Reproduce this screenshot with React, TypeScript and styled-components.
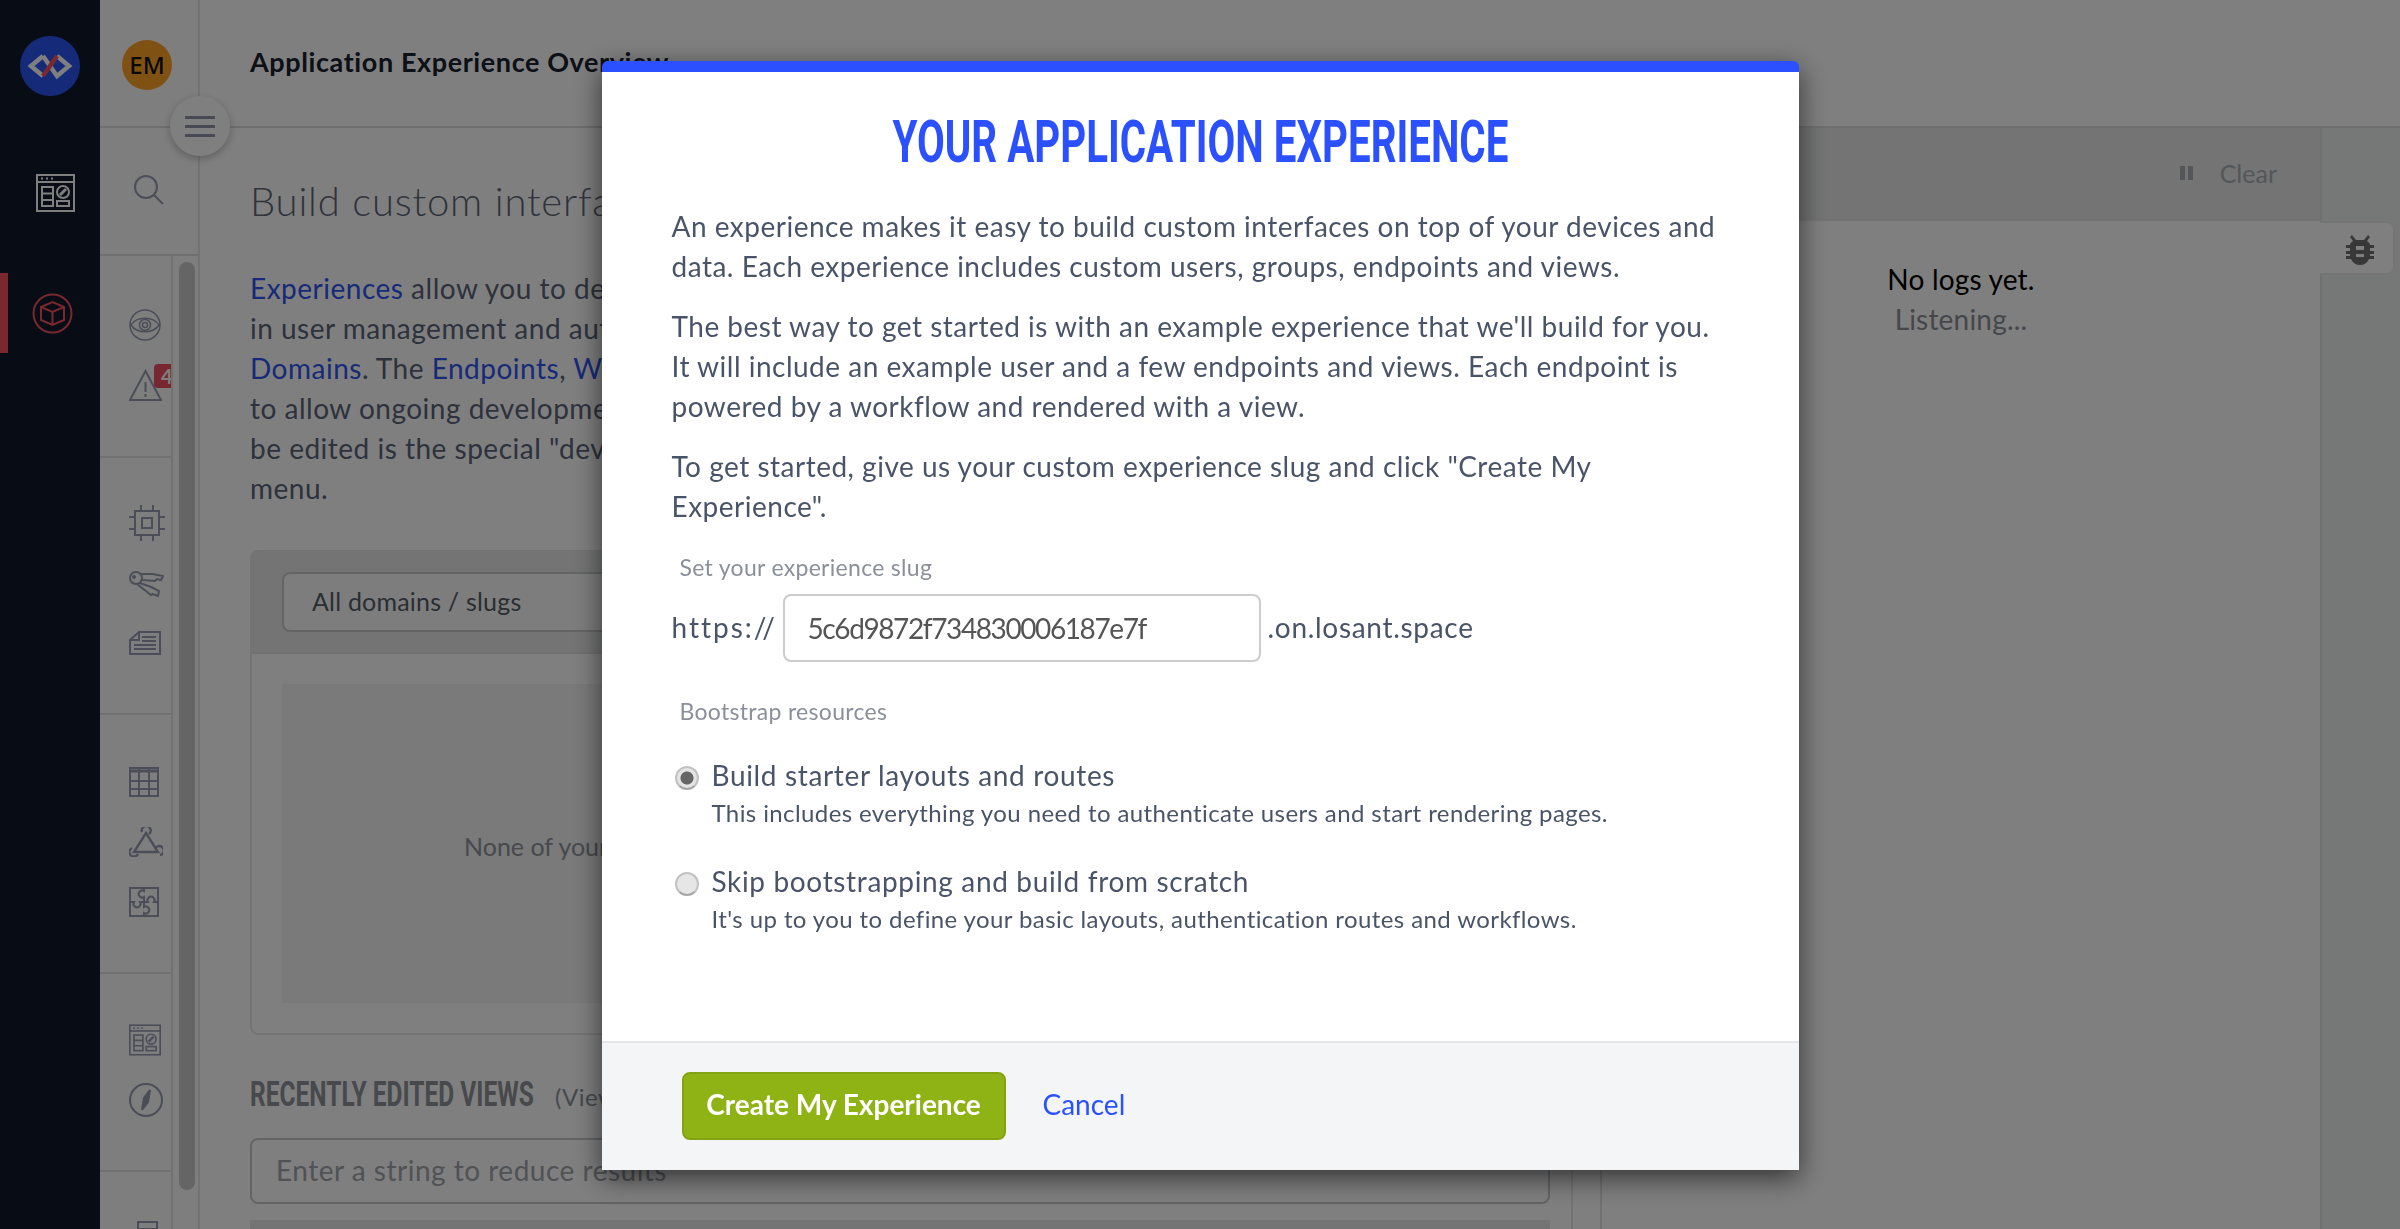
import React from "react";
import styled, { createGlobalStyle } from "styled-components";

const BODY_FONT = `"Lato", "Noto Sans", sans-serif`;
const HEADING_FONT = `"Roboto", "Liberation Sans", sans-serif`;

const GlobalStyle = createGlobalStyle`
  html, body {
    margin: 0;
    padding: 0;
    height: 100%;
    overflow: hidden;
    background: #fff;
  }
  * {
    box-sizing: border-box;
  }
`;

const Page = styled.div`
  width: 2400px;
  height: 1229px;
  display: flex;
  overflow: hidden;
  font-family: ${BODY_FONT};
  font-size: 28px;
  line-height: 40px;
  letter-spacing: 0.5px;
  color: #5a6478;
`;

const DarkRail = styled.nav`
  width: 100px;
  flex: none;
  background: #0e182a;
  display: flex;
  flex-direction: column;
  align-items: center;
`;

const LogoCircle = styled.div`
  width: 60px;
  height: 60px;
  margin-top: 36px;
  border-radius: 50%;
  background: #2c55f5;
  display: flex;
  align-items: center;
  justify-content: center;
`;

const RailButton = styled.div<{ $active?: boolean }>`
  width: 100%;
  height: 80px;
  display: flex;
  align-items: center;
  justify-content: center;
  padding-left: 2px;
  border-left: 8px solid ${(p) => (p.$active ? "#f5505f" : "transparent")};
  padding-right: ${(p) => (p.$active ? "6px" : "0")};
  margin-top: ${(p) => (p.$active ? "40px" : "57px")};
  color: ${(p) => (p.$active ? "#f5505f" : "#fff")};
`;

const SideNav = styled.div`
  width: 100px;
  flex: none;
  background: #fbfdfb;
  border-right: 2px solid #e4e6e4;
  display: flex;
  flex-direction: column;
  overflow: hidden;
`;

const AvatarBox = styled.div`
  height: 128px;
  flex: none;
  border-bottom: 2px solid #dcdedc;
  padding: 40px 0 0 22px;
`;

const Avatar = styled.div`
  width: 50px;
  height: 50px;
  border-radius: 50%;
  background: #ffa526;
  color: #111;
  font-size: 24px;
  font-weight: 500;
  line-height: 50px;
  letter-spacing: 0;
  text-align: center;
  font-family: "Noto Sans", sans-serif;
`;

const SearchBox = styled.div`
  height: 128px;
  flex: none;
  border-bottom: 2px solid #dcdedc;
  padding: 47px 0 0 33px;
  color: #969cb0;
`;

const SideScroll = styled.div`
  flex: 1;
  display: flex;
  min-height: 0;
`;

const SideGroups = styled.div`
  width: 71px;
  flex: none;
`;

const SideGroup = styled.div<{ $height: number; $top: number }>`
  height: ${(p) => p.$height}px;
  padding-top: ${(p) => p.$top}px;
  border-bottom: 2px solid #e0e2e0;
`;

const SideIcon = styled.div`
  height: 60px;
  padding-left: 29px;
  display: flex;
  align-items: center;
  position: relative;
  color: #969cb0;
`;

const Badge = styled.span`
  position: absolute;
  left: 54px;
  top: 9px;
  width: 17px;
  height: 24px;
  overflow: hidden;
  background: #ee4f5e;
  border-radius: 4px 0 0 4px;
  color: #fff;
  font-size: 20px;
  font-weight: 700;
  line-height: 24px;
  padding-left: 7px;
`;

const ScrollTrack = styled.div`
  width: 27px;
  flex: none;
  border-left: 2px solid #e0e2e0;
  padding: 6px 0 0 6px;
`;

const ScrollThumb = styled.div`
  width: 16px;
  height: 928px;
  border-radius: 8px;
  background: #cbcbcb;
`;

const Workspace = styled.div`
  flex: 1;
  display: flex;
  flex-direction: column;
  min-width: 0;
  position: relative;
`;

const TopBar = styled.header`
  height: 128px;
  flex: none;
  border-bottom: 2px solid #dcdedc;
  padding: 42px 0 0 50px;
`;

const PageTitle = styled.h1`
  margin: 0;
  font-size: 27px;
  line-height: 40px;
  font-weight: 700;
  letter-spacing: 0.6px;
  color: #18202f;
`;

const MenuButton = styled.button`
  position: absolute;
  left: -30px;
  top: 96px;
  width: 60px;
  height: 60px;
  border: none;
  border-radius: 50%;
  background: #fff;
  box-shadow: 0 3px 8px rgba(0, 0, 0, 0.25);
  display: flex;
  flex-direction: column;
  align-items: center;
  justify-content: center;
  gap: 6px;
  padding: 0;
`;

const MenuLine = styled.span`
  width: 30px;
  height: 3px;
  background: #8f95a5;
`;

const Columns = styled.div`
  flex: 1;
  display: flex;
  min-height: 0;
`;

const Content = styled.main`
  width: 1371px;
  flex: none;
  padding: 46px 21px 0 50px;
  overflow: hidden;
`;

const ContentGutter = styled.div`
  width: 29px;
  flex: none;
  border-left: 2px solid #e6e8e6;
`;

const Lead = styled.h2`
  margin: 0;
  font-size: 40px;
  line-height: 54px;
  font-weight: 300;
  letter-spacing: 0.8px;
  color: #5f6779;
  white-space: nowrap;
`;

const Intro = styled.p`
  margin: 40px 0 42px;
  white-space: nowrap;
`;

const TextLink = styled.a`
  color: #2f55f0;
`;

const DomainPanel = styled.section`
  height: 485px;
  border: 2px solid #e6e8e6;
  border-radius: 8px;
  display: flex;
  flex-direction: column;
`;

const PanelBar = styled.div`
  height: 102px;
  flex: none;
  background: #e6e8e7;
  padding: 20px 30px;
  border-bottom: 2px solid #e0e2e0;
`;

const DomainSelect = styled.div`
  width: 500px;
  height: 60px;
  background: #fbfbfb;
  border: 2px solid #c6c9cc;
  border-radius: 8px;
  padding-left: 28px;
  line-height: 55px;
  font-size: 25px;
  letter-spacing: 0.2px;
  color: #555c66;
`;

const EmptyState = styled.div`
  margin: 30px;
  flex: 1;
  background: #f2f5f2;
  display: flex;
  align-items: center;
  padding: 4px 0 0 182px;
  font-size: 25px;
  letter-spacing: 0;
  color: #8f939c;
  white-space: nowrap;
`;

const SectionRow = styled.div`
  display: flex;
  align-items: baseline;
  gap: 22px;
  margin: 38px 0 21px;
  height: 44px;
`;

const SectionTitle = styled.h3`
  margin: 0;
  width: 283px;
  flex: none;
  font-family: ${HEADING_FONT};
  font-size: 35px;
  line-height: 44px;
  font-weight: 700;
  letter-spacing: 0;
  color: #8e929b;
  white-space: nowrap;
  transform: scaleX(0.7);
  transform-origin: left center;
`;

const SectionHint = styled.span`
  font-size: 24px;
  color: #8e929b;
  white-space: nowrap;
`;

const FilterInput = styled.div`
  height: 66px;
  border: 2px solid #c6c9cc;
  border-radius: 8px;
  padding-left: 24px;
  line-height: 60px;
  font-size: 28px;
  color: #a1a4aa;
`;

const TableHead = styled.div`
  height: 20px;
  margin-top: 16px;
  background: #e6e8e7;
`;

const LogPanel = styled.aside`
  width: 720px;
  flex: none;
  border-left: 2px solid #e0e2e0;
  display: flex;
  flex-direction: column;
  align-items: center;
`;

const LogBar = styled.div`
  height: 93px;
  width: 100%;
  flex: none;
  background: #e6e8e7;
  display: flex;
  align-items: center;
  justify-content: flex-end;
  gap: 27px;
  padding: 0 43px 3px 0;
  font-size: 25px;
  letter-spacing: 0;
  color: #a8adb5;
`;

const PauseIcon = styled.span`
  width: 13px;
  height: 14px;
  border-left: 5px solid #a8adb5;
  border-right: 5px solid #a8adb5;
`;

const LogEmpty = styled.div`
  margin-top: 38px;
  text-align: center;
  letter-spacing: 0.2px;
  color: #000;
`;

const LogHint = styled.div`
  color: #8a8e96;
`;

const LogRail = styled.div`
  flex: 1;
  background: #edf0ee;
  border-left: 2px solid #dfe1df;
  position: relative;
`;

const DebugTab = styled.div`
  position: absolute;
  left: -2px;
  top: 93px;
  width: 75px;
  height: 54px;
  background: #fff;
  border: 2px solid #e8eae8;
  border-left: none;
  border-radius: 0 8px 8px 0;
  padding: 11px 0 0 26px;
  color: #707070;
`;

const Overlay = styled.div`
  position: fixed;
  inset: 0;
  background: rgba(0, 0, 0, 0.5);
  display: flex;
  justify-content: center;
  padding-top: 61px;
`;

const Modal = styled.div`
  width: 1197px;
  height: 1109px;
  background: #fff;
  border-top: 11px solid #2a50ff;
  border-radius: 6px 6px 0 0;
  box-shadow: 0 8px 28px rgba(0, 0, 0, 0.6);
  display: flex;
  flex-direction: column;
`;

const ModalBody = styled.div`
  flex: 1;
  padding: 40px 70px 0;
`;

const ModalTitle = styled.h2`
  margin: 0 0 34px;
  font-family: ${HEADING_FONT};
  font-size: 59px;
  line-height: 60px;
  font-weight: 700;
  letter-spacing: 0;
  text-align: center;
  color: #2a50ff;
  text-transform: uppercase;
  white-space: nowrap;
  transform: scaleX(0.683);
`;

const ModalText = styled.p`
  margin: 0 0 20px;
  color: #4a5468;
`;

const FieldLabel = styled.div<{ $top?: number }>`
  margin: ${(p) => p.$top ?? 0}px 0 0 8px;
  font-size: 23px;
  line-height: 30px;
  letter-spacing: 0.3px;
  color: #8a8f9a;
`;

const SlugRow = styled.div`
  display: flex;
  align-items: center;
  margin: 12px 0 34px;
  color: #4a5468;
`;

const Scheme = styled.span`
  width: 111px;
  flex: none;
  padding-bottom: 3px;
  letter-spacing: 2px;
`;

const SlugInput = styled.div`
  width: 478px;
  height: 68px;
  flex: none;
  border: 2px solid #ccc;
  border-radius: 8px;
  padding-left: 23px;
  line-height: 64px;
  letter-spacing: -1.4px;
  color: #555;
`;

const SlugSuffix = styled.span`
  margin-left: 7px;
  padding-bottom: 3px;
  letter-spacing: 0.7px;
`;

const OptionRow = styled.label<{ $top: number }>`
  display: flex;
  gap: 13px;
  margin-top: ${(p) => p.$top}px;
`;

const RadioDot = styled.span<{ $checked?: boolean }>`
  width: 24px;
  height: 24px;
  flex: none;
  margin: 11px 0 0 3px;
  border-radius: 50%;
  background: ${(p) =>
    p.$checked ? "radial-gradient(circle, #666 0 6px, #e4e4e4 7px)" : "#e6e6e6"};
  border: 2px solid #c2c2c2;
  border-bottom-color: #a6a6a6;
`;

const OptionTitle = styled.div`
  letter-spacing: 0.65px;
  color: #4a5468;
`;

const OptionHint = styled.div`
  font-size: 24px;
  line-height: 35px;
  letter-spacing: 0.4px;
  color: #4a5468;
`;

const ModalFooter = styled.footer`
  height: 129px;
  flex: none;
  background: #f4f5f7;
  border-top: 2px solid #e4e5e8;
  display: flex;
  align-items: center;
  gap: 37px;
  padding: 0 0 2px 80px;
`;

const PrimaryButton = styled.button`
  width: 324px;
  height: 68px;
  border: 2px solid #84a313;
  border-radius: 8px;
  background: #8fb314;
  color: #fff;
  font-family: ${BODY_FONT};
  font-size: 28px;
  font-weight: 700;
  padding: 0 0 3px;
`;

const CancelLink = styled.a`
  color: #2a50ff;
  letter-spacing: 0;
  margin-bottom: 3px;
`;

const Ic = ({ w, h, children, vb }: { w: number; h: number; vb?: string; children: React.ReactNode }) => (
  <svg
    width={w}
    height={h}
    viewBox={vb ?? `0 0 ${w} ${h}`}
    fill="none"
    stroke="currentColor"
    strokeWidth={2}
  >
    {children}
  </svg>
);

const LogoMark = () => (
  <svg width="60" height="60" viewBox="0 0 60 60" fill="none" strokeWidth="4.5">
    <path d="M23 20 L11 30 L23 40 M23 20 L37 40 L49 30 L37 20" stroke="#fff" />
    <path d="M23 40 L37 20" stroke="#f5505f" />
  </svg>
);

const DashIcon = ({ w, h }: { w: number; h: number }) => (
  <Ic w={w} h={h} vb="0 0 39 38">
    <rect x="1" y="1" width="37" height="36" />
    <path d="M1 8 H38" />
    <path d="M5 4.5 h2 M10 4.5 h2 M15 4.5 h2" />
    <rect x="6" y="13" width="11" height="19" />
    <path d="M6 19.5 H17 M6 26 H17" />
    <circle cx="27" cy="18" r="6" />
    <path d="M24 21 L30 15" strokeWidth={3} />
    <rect x="21" y="27" width="12" height="5" />
  </Ic>
);

const CubeIcon = () => (
  <Ic w={41} h={41}>
    <circle cx="20.5" cy="20.5" r="19" />
    <path d="M9 14 L20.5 9 L32 14 V27 L20.5 32 L9 27 Z M9 14 L20.5 19 L32 14 M20.5 19 V32" />
  </Ic>
);

const SearchIcon = () => (
  <Ic w={31} h={31}>
    <circle cx="13" cy="12" r="11" />
    <path d="M21 20 L30 29" />
  </Ic>
);

const EyeIcon = () => (
  <Ic w={32} h={32}>
    <g strokeWidth={1.5}>
      <circle cx="16" cy="16" r="15" />
      <path d="M2 16 C8 7 24 7 30 16 C24 25 8 25 2 16 Z" />
      <circle cx="16" cy="16" r="5.5" />
      <circle cx="16" cy="16" r="2.5" />
    </g>
  </Ic>
);

const WarnIcon = () => (
  <Ic w={33} h={33}>
    <path d="M16.5 2 L32 31 H1 Z" />
    <path d="M16.5 13 V23 M16.5 25 V28" />
  </Ic>
);

const ChipIcon = () => (
  <Ic w={36} h={36}>
    <rect x="6" y="6" width="24" height="24" />
    <rect x="13" y="13" width="10" height="10" />
    <path d="M12 0 V6 M24 0 V6 M12 30 V36 M24 30 V36 M0 12 H6 M0 24 H6 M30 12 H36 M30 24 H36" />
  </Ic>
);

const KeyIcon = () => (
  <Ic w={35} h={27}>
    <circle cx="7" cy="8" r="6" />
    <circle cx="5" cy="7" r="1" fill="currentColor" />
    <path d="M12 4 L24 4 L34 6 L32 10 L28 9 L26 11 L13 10" />
    <path d="M11 13 L22 17 L30 21 L29 26 L24 24 L22 25 L8 14" />
  </Ic>
);

const NewsIcon = () => (
  <Ic w={32} h={24}>
    <path d="M10 1 H31 V23 H1 V9 Z M10 1 V9 H1" />
    <path d="M13 6 H27 M13 10 H27 M5 14 H27 M5 18 H27" />
  </Ic>
);

const TableIcon = () => (
  <Ic w={30} h={30}>
    <rect x="1" y="1" width="28" height="28" />
    <path d="M1 4 H29" strokeWidth={3} />
    <path d="M1 14 H29 M1 22 H29 M10 1 V29 M20 1 V29" />
  </Ic>
);

const TriangleIcon = () => (
  <Ic w={34} h={30}>
    <path d="M17 6 L5 25 H29 Z" strokeWidth={2.4} />
    <path d="M13 5 A4.5 4.5 0 1 1 20 7 M9 27 A4.5 4.5 0 1 1 3 21 M26 22 A4.5 4.5 0 1 1 31 28" strokeWidth={2.4} />
  </Ic>
);

const PuzzleIcon = () => (
  <Ic w={30} h={30}>
    <rect x="1" y="1" width="28" height="28" />
    <path d="M15 1 V4 A3.5 3.5 0 1 0 15 10 V15 H11 A3.5 3.5 0 1 1 5 15 H1" />
    <path d="M15 15 H19 A3.5 3.5 0 1 1 25 15 H29" />
    <path d="M15 15 V20 A3.5 3.5 0 1 1 15 26 V29" />
  </Ic>
);

const CompassIcon = () => (
  <Ic w={34} h={34}>
    <circle cx="17" cy="17" r="16" />
    <path d="M21 7 L19 19 L13 27 L15 15 Z" fill="currentColor" />
  </Ic>
);

const ClippedIcon = () => (
  <Ic w={36} h={30}>
    <rect x="9" y="1" width="19" height="28" />
    <path d="M9 8 H28" />
  </Ic>
);

const BugIcon = () => (
  <svg width="28" height="30" viewBox="0 0 28 30" fill="currentColor">
    <path d="M6 0 L10 5 H18 L22 0 L24 2 L21 6 C23 7 24 9 24 10 H28 V13 H24 V16 H28 V19 H24 V21 H28 V24 H23 C21 28 18 30 14 30 C10 30 7 28 5 24 H0 V21 H4 V19 H0 V16 H4 V13 H0 V10 H4 C4 9 5 7 7 6 L4 2 Z M10 11 V15 H18 V11 Z M10 19 V22 H18 V19 Z" fillRule="evenodd" />
  </svg>
);

const App: React.FC = () => {
  return (
    <Page>
      <GlobalStyle />
      <DarkRail>
        <LogoCircle>
          <LogoMark />
        </LogoCircle>
        <RailButton>
          <DashIcon w={39} h={38} />
        </RailButton>
        <RailButton $active>
          <CubeIcon />
        </RailButton>
      </DarkRail>

      <SideNav>
        <AvatarBox>
          <Avatar>EM</Avatar>
        </AvatarBox>
        <SearchBox>
          <SearchIcon />
        </SearchBox>
        <SideScroll>
          <SideGroups>
            <SideGroup $height={202} $top={39}>
              <SideIcon>
                <EyeIcon />
              </SideIcon>
              <SideIcon>
                <WarnIcon />
                <Badge>4</Badge>
              </SideIcon>
            </SideGroup>
            <SideGroup $height={257} $top={35}>
              <SideIcon>
                <ChipIcon />
              </SideIcon>
              <SideIcon>
                <KeyIcon />
              </SideIcon>
              <SideIcon>
                <NewsIcon />
              </SideIcon>
            </SideGroup>
            <SideGroup $height={259} $top={37}>
              <SideIcon>
                <TableIcon />
              </SideIcon>
              <SideIcon>
                <TriangleIcon />
              </SideIcon>
              <SideIcon>
                <PuzzleIcon />
              </SideIcon>
            </SideGroup>
            <SideGroup $height={198} $top={36}>
              <SideIcon>
                <DashIcon w={32} h={32} />
              </SideIcon>
              <SideIcon>
                <CompassIcon />
              </SideIcon>
            </SideGroup>
            <SideGroup $height={100} $top={34}>
              <SideIcon>
                <ClippedIcon />
              </SideIcon>
            </SideGroup>
          </SideGroups>
          <ScrollTrack>
            <ScrollThumb />
          </ScrollTrack>
        </SideScroll>
      </SideNav>

      <Workspace>
        <TopBar>
          <PageTitle>Application Experience Overview</PageTitle>
        </TopBar>
        <MenuButton>
          <MenuLine />
          <MenuLine />
          <MenuLine />
        </MenuButton>
        <Columns>
          <Content>
            <Lead>Build custom interfaces on top of your devices</Lead>
            <Intro>
              <TextLink>Experiences</TextLink> allow you to develop custom web applications, with built-
              <br />
              in user management and authentication, and host them on your own
              <br />
              <TextLink>Domains</TextLink>. The <TextLink>Endpoints</TextLink>, <TextLink>Workflows</TextLink> and Views are versioned
              <br />
              to allow ongoing development without disruption. The only version that can
              <br />
              be edited is the special "develop" version, selected from the version
              <br />
              menu.
            </Intro>
            <DomainPanel>
              <PanelBar>
                <DomainSelect>All domains / slugs</DomainSelect>
              </PanelBar>
              <EmptyState>None of your experience endpoints are using a custom domain or slug.</EmptyState>
            </DomainPanel>
            <SectionRow>
              <SectionTitle>RECENTLY EDITED VIEWS</SectionTitle>
              <SectionHint>(View all)</SectionHint>
            </SectionRow>
            <FilterInput>Enter a string to reduce results</FilterInput>
            <TableHead />
          </Content>
          <ContentGutter />
          <LogPanel>
            <LogBar>
              <PauseIcon />
              <span>Clear</span>
            </LogBar>
            <LogEmpty>
              No logs yet.
              <LogHint>Listening...</LogHint>
            </LogEmpty>
          </LogPanel>
          <LogRail>
            <DebugTab>
              <BugIcon />
            </DebugTab>
          </LogRail>
        </Columns>
      </Workspace>

      <Overlay>
        <Modal>
          <ModalBody>
            <ModalTitle>Your Application Experience</ModalTitle>
            <ModalText>
              An experience makes it easy to build custom interfaces on top of your devices and data. Each experience includes custom users, groups, endpoints and views.
            </ModalText>
            <ModalText>
              The best way to get started is with an example experience that we'll build for you. It will include an example user and a few endpoints and views. Each endpoint is powered by a workflow and rendered with a view.
            </ModalText>
            <ModalText>
              To get started, give us your custom experience slug and click "Create My Experience".
            </ModalText>
            <FieldLabel $top={26}>Set your experience slug</FieldLabel>
            <SlugRow>
              <Scheme>https://</Scheme>
              <SlugInput>5c6d9872f734830006187e7f</SlugInput>
              <SlugSuffix>.on.losant.space</SlugSuffix>
            </SlugRow>
            <FieldLabel>Bootstrap resources</FieldLabel>
            <OptionRow $top={29}>
              <RadioDot $checked />
              <div>
                <OptionTitle>Build starter layouts and routes</OptionTitle>
                <OptionHint>This includes everything you need to authenticate users and start rendering pages.</OptionHint>
              </div>
            </OptionRow>
            <OptionRow $top={31}>
              <RadioDot />
              <div>
                <OptionTitle>Skip bootstrapping and build from scratch</OptionTitle>
                <OptionHint>It's up to you to define your basic layouts, authentication routes and workflows.</OptionHint>
              </div>
            </OptionRow>
          </ModalBody>
          <ModalFooter>
            <PrimaryButton>Create My Experience</PrimaryButton>
            <CancelLink>Cancel</CancelLink>
          </ModalFooter>
        </Modal>
      </Overlay>
    </Page>
  );
};

export default App;
